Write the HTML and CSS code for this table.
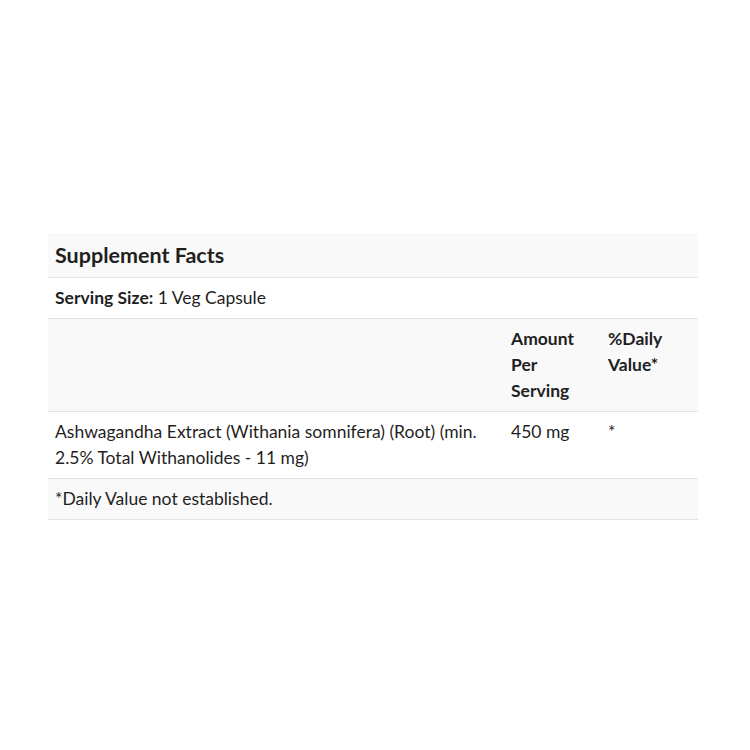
FILE: index.html
```html
<!DOCTYPE html>
<html>
<head>
<meta charset="utf-8">
<link rel="stylesheet" href="styles.css">
</head>
<body>
<div class="page">
  <table class="facts">
    <tr class="title-row shaded">
      <th colspan="3" class="title">Supplement Facts</th>
    </tr>
    <tr>
      <td colspan="3"><strong>Serving Size:</strong> 1 Veg Capsule</td>
    </tr>
    <tr class="shaded head-row">
      <td class="c1"></td>
      <td class="c2"><strong>Amount Per Serving</strong></td>
      <td class="c3"><strong>%Daily Value*</strong></td>
    </tr>
    <tr>
      <td class="c1">Ashwagandha Extract (Withania somnifera) (Root) (min. 2.5% Total Withanolides - 11 mg)</td>
      <td class="c2">450 mg</td>
      <td class="c3">*</td>
    </tr>
    <tr class="shaded">
      <td colspan="3">*Daily Value not established.</td>
    </tr>
  </table>
</div>
</body>
</html>
```
FILE: styles.css
```css
html, body {
  margin: 0;
  padding: 0;
  background: #ffffff;
}
.page {
  width: 750px;
  height: 750px;
  padding: 233px 52px 0 48px;
  box-sizing: border-box;
  font-family: Lato, "Open Sans", sans-serif;
  color: #1f1f1f;
}
.facts {
  width: 650px;
  border-collapse: collapse;
  font-size: 17.5px;
  line-height: 26px;
}
.facts td, .facts th {
  padding: 7px 7px;
  border-bottom: 1px solid #e3e3e3;
  vertical-align: top;
  text-align: left;
}
.shaded {
  background: #f9f9f9;
}
.title {
  font-size: 21.5px;
  line-height: 30px;
  font-weight: 700;
}
.c1 { width: 442px; }
.c2 { width: 83px; }
.c3 { width: 83px; }
strong { font-weight: 700; }
```
